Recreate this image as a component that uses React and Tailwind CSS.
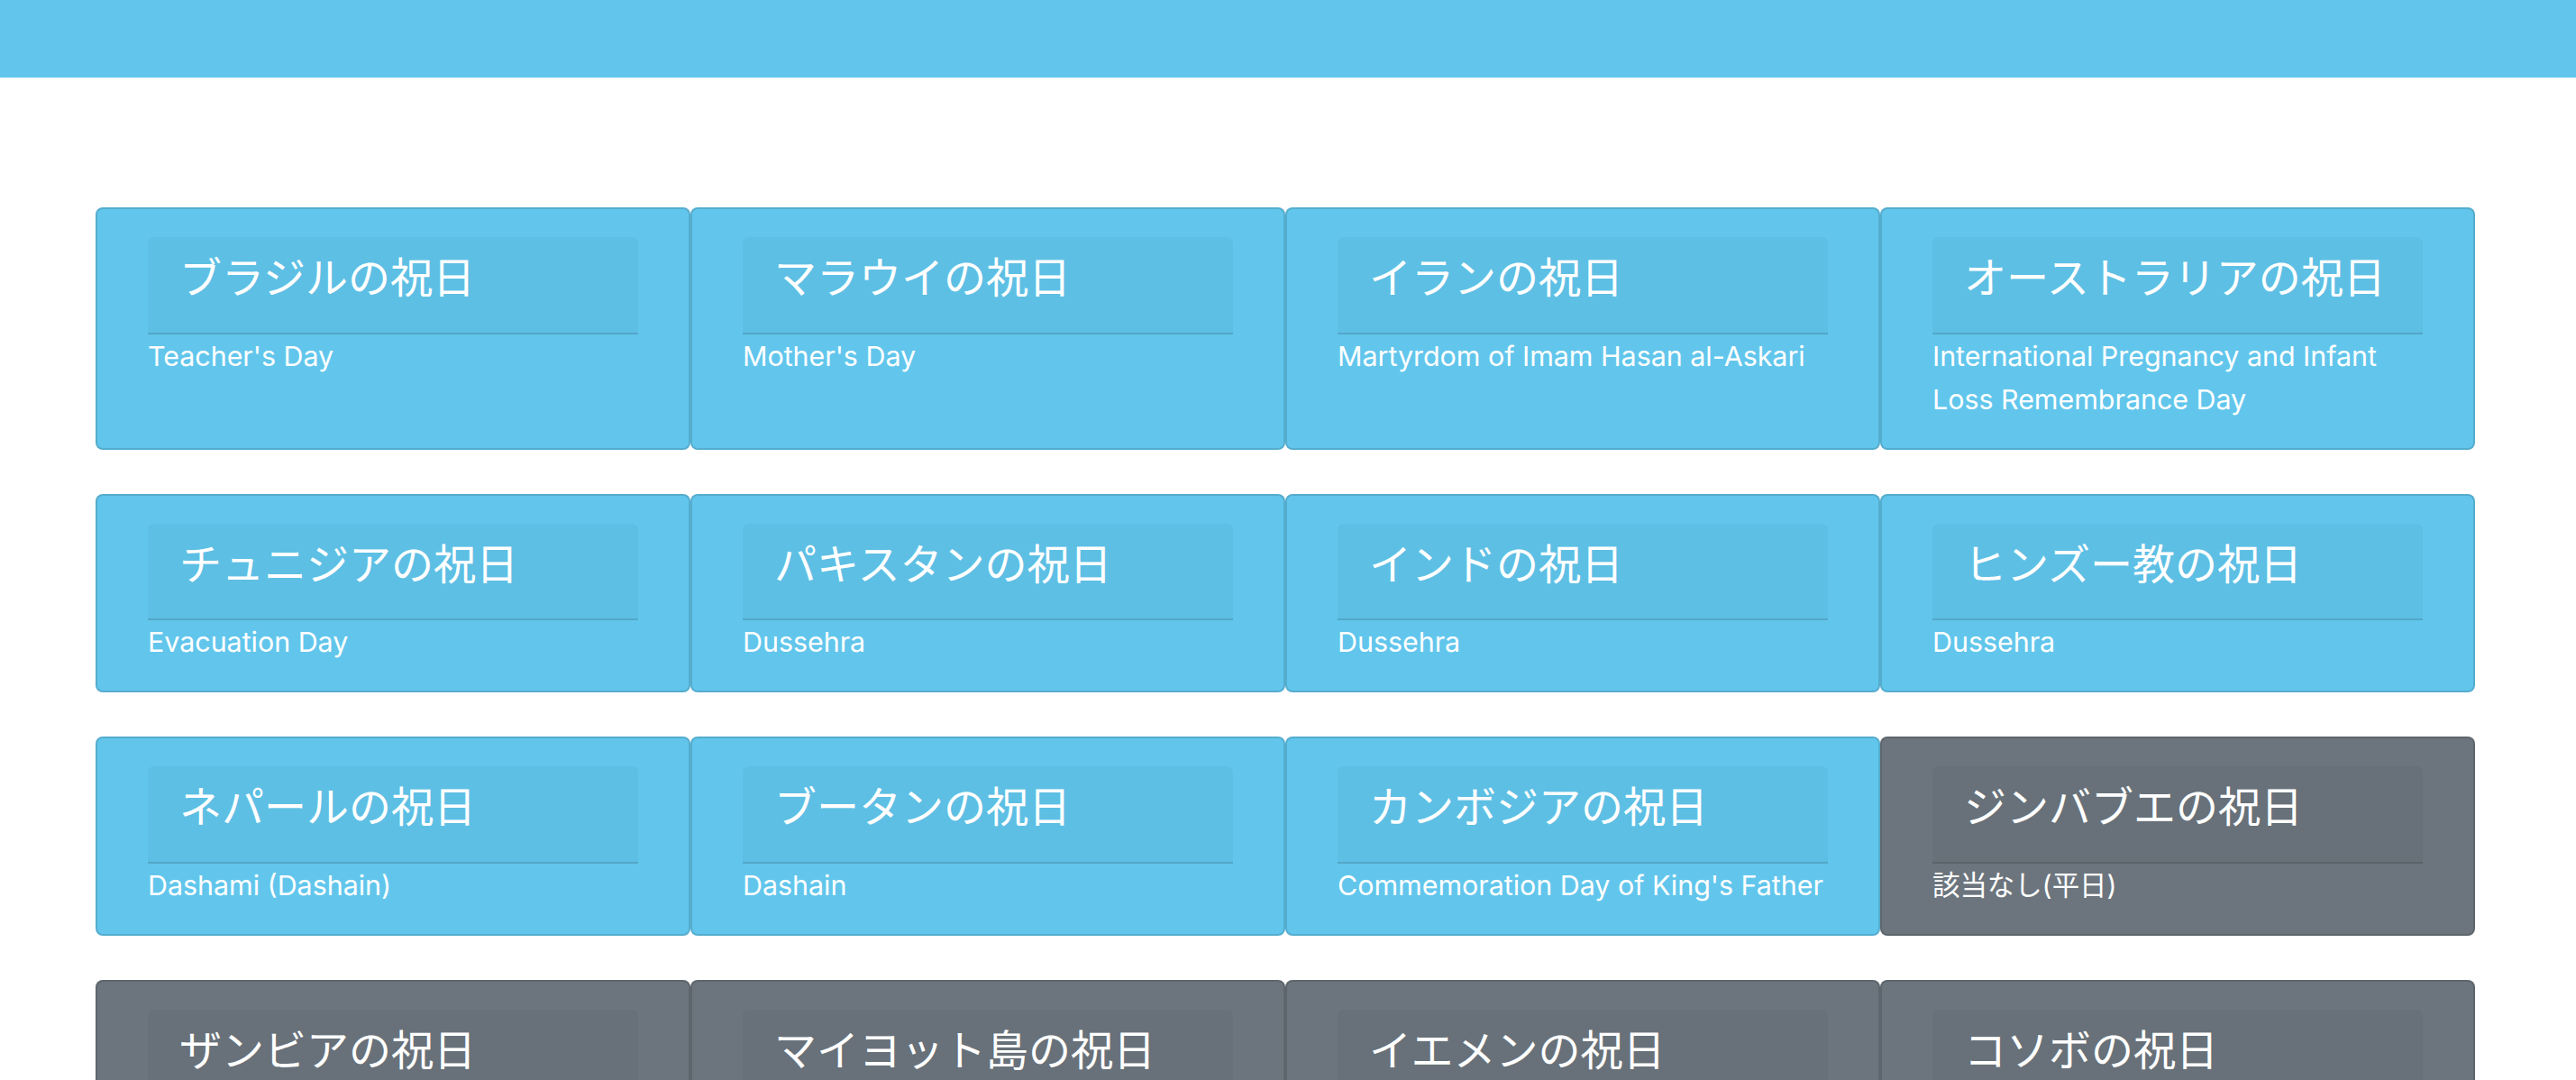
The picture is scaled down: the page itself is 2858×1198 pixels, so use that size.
const holidays = [
  { country: 'ブラジルの祝日', name: "Teacher's Day", active: true },
  { country: 'マラウイの祝日', name: "Mother's Day", active: true },
  { country: 'イランの祝日', name: 'Martyrdom of Imam Hasan al-Askari', active: true },
  { country: 'オーストラリアの祝日', name: 'International Pregnancy and Infant Loss Remembrance Day', active: true },
  { country: 'チュニジアの祝日', name: 'Evacuation Day', active: true },
  { country: 'パキスタンの祝日', name: 'Dussehra', active: true },
  { country: 'インドの祝日', name: 'Dussehra', active: true },
  { country: 'ヒンズー教の祝日', name: 'Dussehra', active: true },
  { country: 'ネパールの祝日', name: 'Dashami (Dashain)', active: true },
  { country: 'ブータンの祝日', name: 'Dashain', active: true },
  { country: 'カンボジアの祝日', name: "Commemoration Day of King's Father", active: true },
  { country: 'ジンバブエの祝日', name: '該当なし(平日)', active: false },
  { country: 'ザンビアの祝日', name: '該当なし(平日)', active: false },
  { country: 'マイヨット島の祝日', name: '該当なし(平日)', active: false },
  { country: 'イエメンの祝日', name: '該当なし(平日)', active: false },
  { country: 'コソボの祝日', name: '該当なし(平日)', active: false },
];

const HolidayCard = ({ country, name, active }) => (
  <div
    className={`rounded-[8px] border-2 border-black/[0.125] px-[56px] pt-[31px] pb-[30px] text-white ${
      active ? 'bg-[#62c6ec]' : 'bg-[#6c757d]'
    }`}
  >
    <div className="rounded-t-[6px] border-b-2 border-black/[0.125] bg-black/[0.03] pl-[35px] pr-[16px] pt-[16px] pb-[32px]">
      <h4 className="m-0 whitespace-nowrap text-[47px] leading-[57.6px] font-normal">{country}</h4>
    </div>
    <p className="m-0 text-[30.4px] leading-[48px]">{name}</p>
  </div>
);

const App = () => {
  return (
    <div className="min-h-screen bg-white font-['Inter','Noto_Sans_CJK_JP',sans-serif]">
      <div className="h-[86px] bg-[#62c6ec]"></div>
      <div className="ml-[106px] mt-[144px] grid w-[2640px] grid-cols-4 gap-y-[49px]">
        {holidays.map((h) => (
          <HolidayCard key={h.country} {...h} />
        ))}
      </div>
    </div>
  );
};

export default App;
